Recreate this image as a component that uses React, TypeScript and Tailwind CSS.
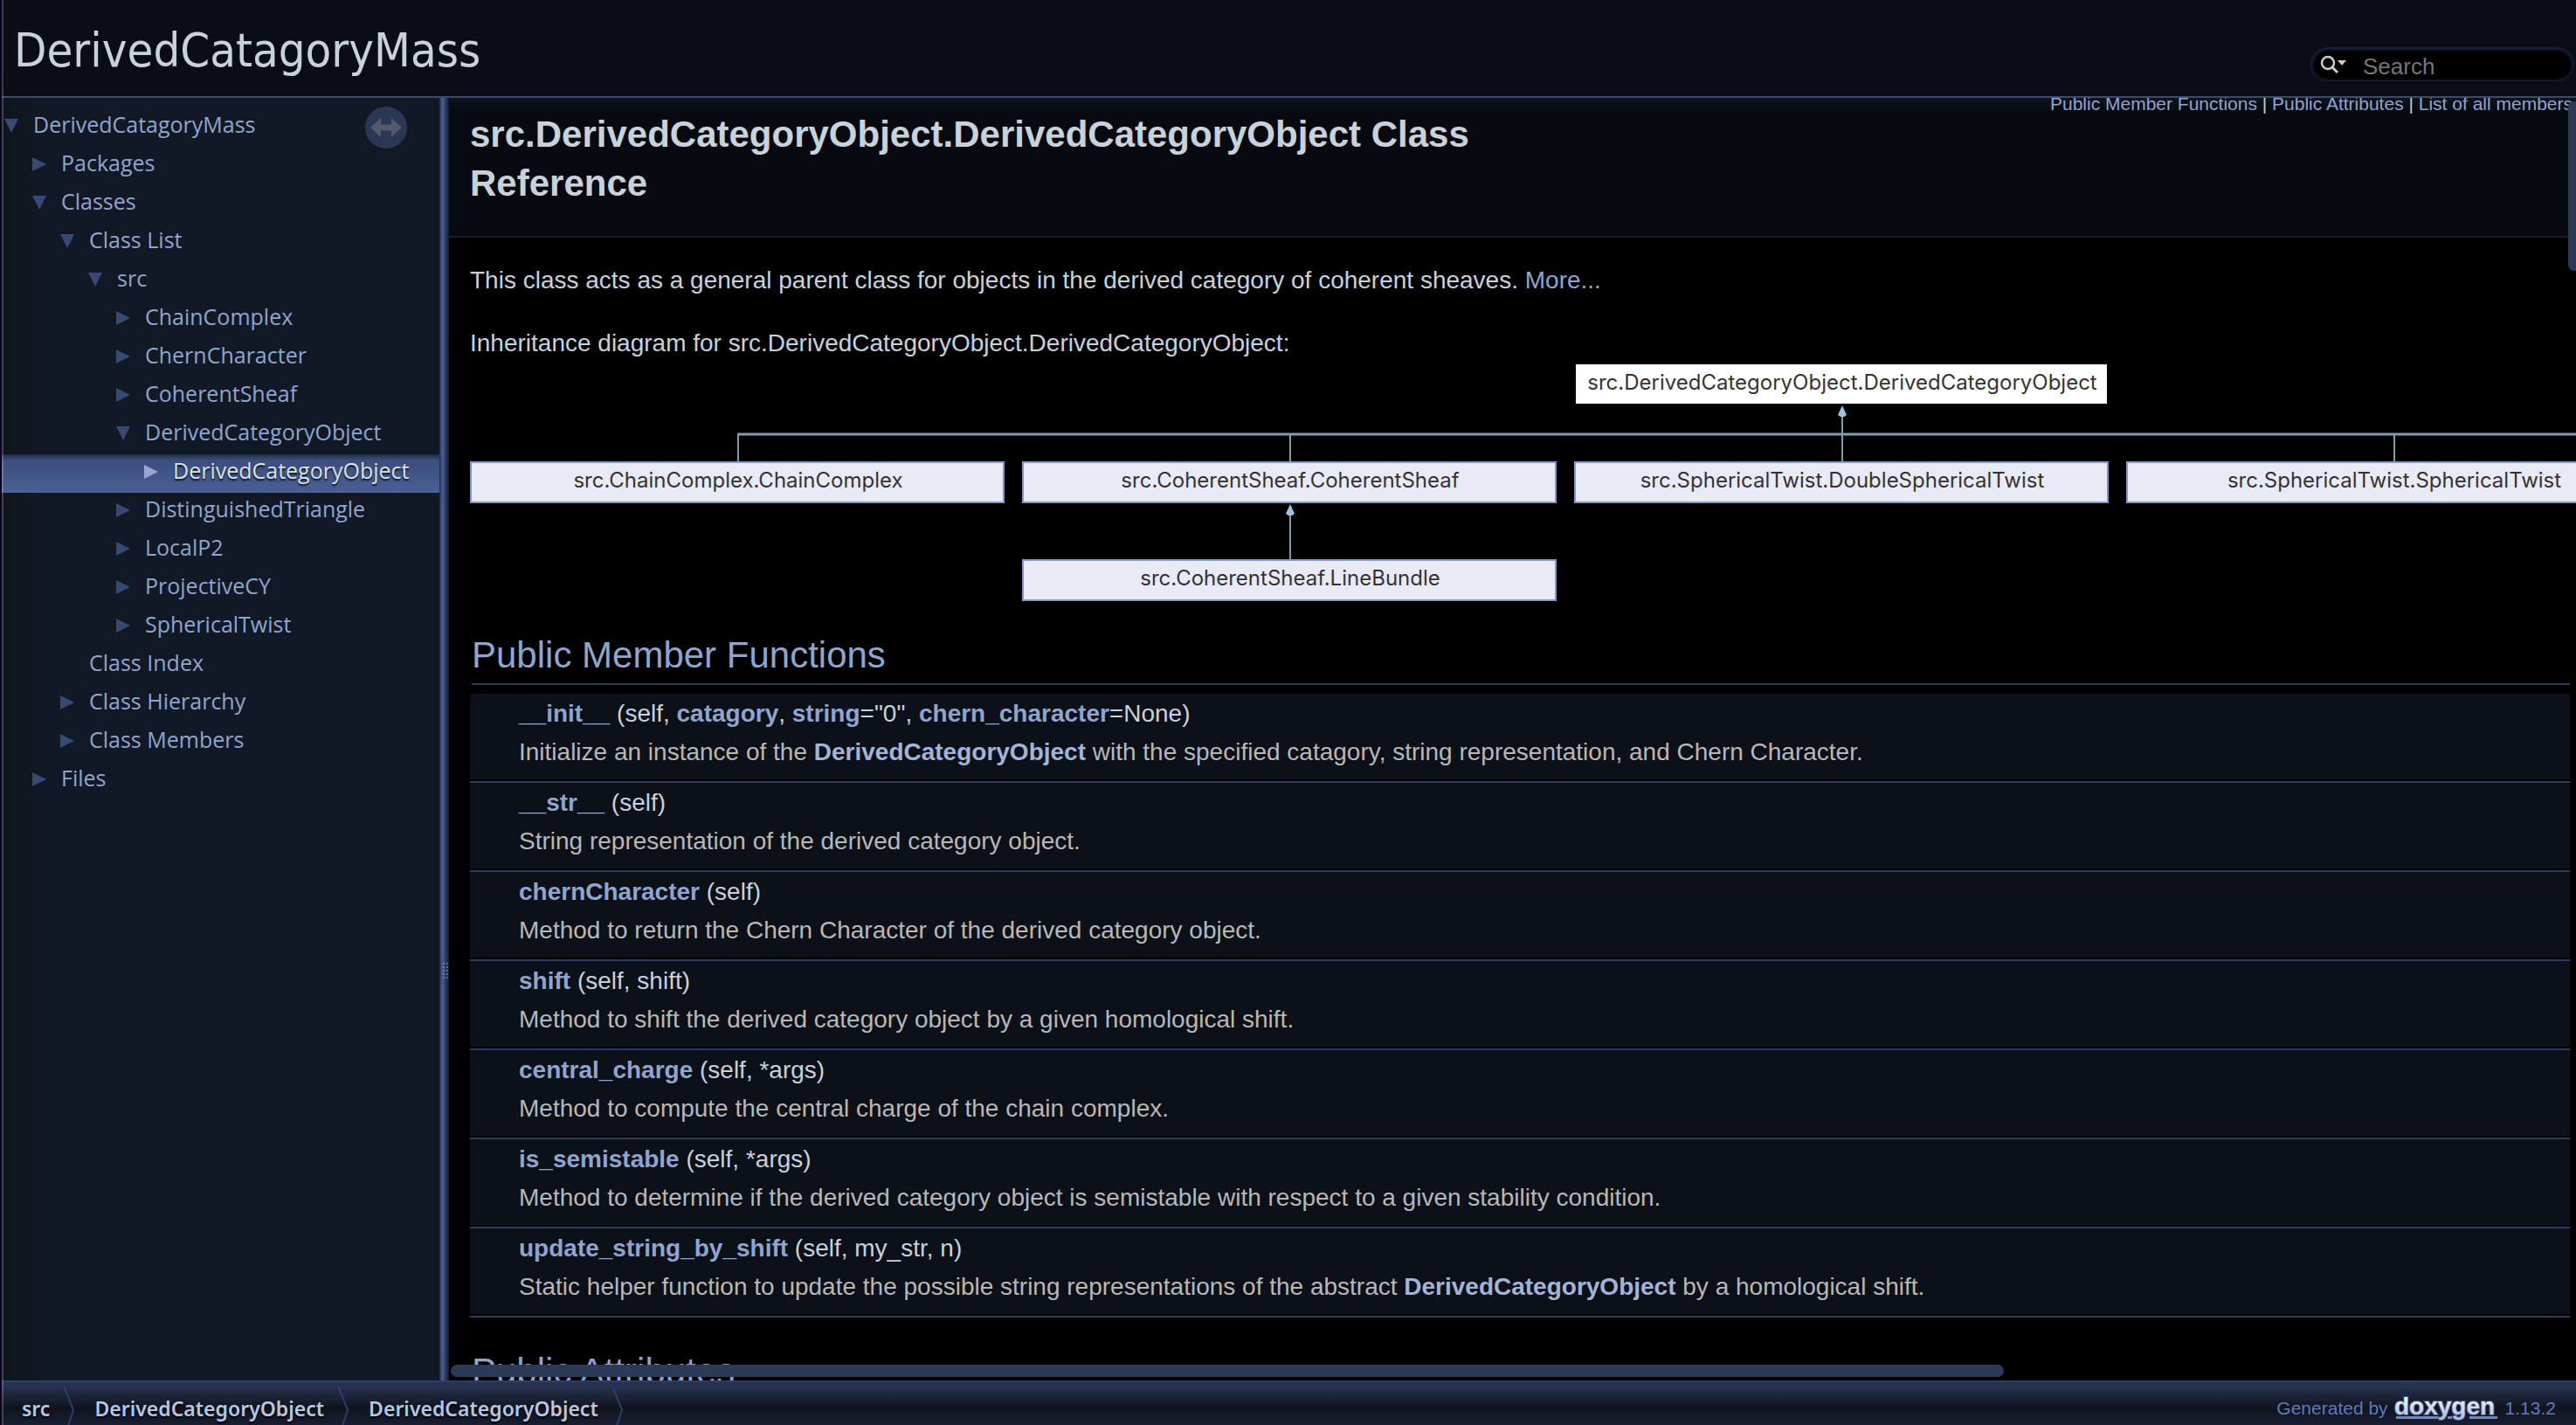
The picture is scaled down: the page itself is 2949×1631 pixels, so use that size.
import type { ReactNode } from 'react';

type Arrow = 'open' | 'closed' | 'none';

const navItems: { label: string; level: number; arrow: Arrow; selected?: boolean }[] = [
  { label: 'DerivedCatagoryMass', level: 0, arrow: 'open' },
  { label: 'Packages', level: 1, arrow: 'closed' },
  { label: 'Classes', level: 1, arrow: 'open' },
  { label: 'Class List', level: 2, arrow: 'open' },
  { label: 'src', level: 3, arrow: 'open' },
  { label: 'ChainComplex', level: 4, arrow: 'closed' },
  { label: 'ChernCharacter', level: 4, arrow: 'closed' },
  { label: 'CoherentSheaf', level: 4, arrow: 'closed' },
  { label: 'DerivedCategoryObject', level: 4, arrow: 'open' },
  { label: 'DerivedCategoryObject', level: 5, arrow: 'closed', selected: true },
  { label: 'DistinguishedTriangle', level: 4, arrow: 'closed' },
  { label: 'LocalP2', level: 4, arrow: 'closed' },
  { label: 'ProjectiveCY', level: 4, arrow: 'closed' },
  { label: 'SphericalTwist', level: 4, arrow: 'closed' },
  { label: 'Class Index', level: 2, arrow: 'none' },
  { label: 'Class Hierarchy', level: 2, arrow: 'closed' },
  { label: 'Class Members', level: 2, arrow: 'closed' },
  { label: 'Files', level: 1, arrow: 'closed' },
];

function Link({ children }: { children: ReactNode }) {
  return (
    <a href="#" className="text-[#90a5ce]">
      {children}
    </a>
  );
}

function Bold({ children }: { children: ReactNode }) {
  return (
    <a href="#" className="font-bold text-[#90a5ce]">
      {children}
    </a>
  );
}

function DescLink() {
  return (
    <a href="#" className="font-bold text-[#a3b4d7]">
      DerivedCategoryObject
    </a>
  );
}

const members: { signature: ReactNode; description: ReactNode }[] = [
  {
    signature: (
      <>
        <Bold>__init__</Bold> (self, <Bold>catagory</Bold>, <Bold>string</Bold>="0", <Bold>chern_character</Bold>=None)
      </>
    ),
    description: (
      <>
        Initialize an instance of the <DescLink /> with the specified catagory, string representation, and Chern
        Character.
      </>
    ),
  },
  {
    signature: (
      <>
        <Bold>__str__</Bold> (self)
      </>
    ),
    description: 'String representation of the derived category object.',
  },
  {
    signature: (
      <>
        <Bold>chernCharacter</Bold> (self)
      </>
    ),
    description: 'Method to return the Chern Character of the derived category object.',
  },
  {
    signature: (
      <>
        <Bold>shift</Bold> (self, shift)
      </>
    ),
    description: 'Method to shift the derived category object by a given homological shift.',
  },
  {
    signature: (
      <>
        <Bold>central_charge</Bold> (self, *args)
      </>
    ),
    description: 'Method to compute the central charge of the chain complex.',
  },
  {
    signature: (
      <>
        <Bold>is_semistable</Bold> (self, *args)
      </>
    ),
    description:
      'Method to determine if the derived category object is semistable with respect to a given stability condition.',
  },
  {
    signature: (
      <>
        <Bold>update_string_by_shift</Bold> (self, my_str, n)
      </>
    ),
    description: (
      <>
        Static helper function to update the possible string representations of the abstract <DescLink /> by a
        homological shift.
      </>
    ),
  },
];

function TreeArrow({ kind, selected }: { kind: Arrow; selected?: boolean }) {
  return (
    <svg width="16" height="40" viewBox="0 0 16 40" className={selected ? 'fill-[#98a7cb]' : 'fill-[#374a76]'}>
      {kind === 'open' && <path d="M0 12H16L8 28Z" />}
      {kind === 'closed' && <path d="M0 12L16 20L0 28Z" />}
    </svg>
  );
}

function Sidebar() {
  return (
    <nav className="relative w-[501px] shrink-0 bg-linear-to-r from-[#10141c] to-[#121926] to-10% pt-3">
      <ul>
        {navItems.map((item, i) => (
          <li
            key={i}
            className={
              item.selected
                ? 'flex h-11 items-start gap-[17px] bg-linear-to-b from-[#202b45] via-[#3b4d7c] via-15% to-[#4a6096]'
                : 'flex h-11 items-start gap-[17px]'
            }
            style={{ paddingLeft: 3 + item.level * 32 }}
          >
            <TreeArrow kind={item.arrow} selected={item.selected} />
            <a
              href="#"
              className={
                item.selected
                  ? 'font-["Open_Sans",sans-serif] text-[25px] leading-9 text-[#dce1ec] [text-shadow:0_2px_2px_#0b101a]'
                  : 'font-["Open_Sans",sans-serif] text-[25px] leading-9 text-[#90a5ce]'
              }
            >
              {item.label}
            </a>
          </li>
        ))}
      </ul>
      <button aria-label="Toggle synchronisation" className="absolute top-2.5 right-[37px] size-12">
        <svg viewBox="0 0 48 48" className="size-12">
          <circle cx="24" cy="24" r="24" fill="#2b3853" />
          <path d="M6 24L18 13V20.500H30V13L42 24L30 35V27.500H18V35Z" fill="#535a69" />
        </svg>
      </button>
    </nav>
  );
}

function Splitter() {
  return (
    <div className="flex w-[11px] shrink-0 items-center justify-end bg-linear-to-r from-[#1e2a45] via-[#4a5f95] via-30% to-[#141b2b]">
      <svg width="8" height="18" viewBox="0 0 8 18" className="mt-[530px] fill-[#8d9cbf]" opacity="0.6">
        {[0, 4, 8, 12, 16].map((y) => (
          <g key={y}>
            <rect x="1" y={y} width="2" height="2" />
            <rect x="5" y={y} width="2" height="2" />
          </g>
        ))}
      </svg>
    </div>
  );
}

const childBoxes = [
  { x: 0, y: 113, label: 'src.ChainComplex.ChainComplex' },
  { x: 632, y: 113, label: 'src.CoherentSheaf.CoherentSheaf' },
  { x: 1264, y: 113, label: 'src.SphericalTwist.DoubleSphericalTwist' },
  { x: 1896, y: 113, label: 'src.SphericalTwist.SphericalTwist' },
  { x: 632, y: 225, label: 'src.CoherentSheaf.LineBundle' },
];

function InheritanceDiagram() {
  return (
    <svg
      width="2510"
      height="274"
      viewBox="0 0 2510 274"
      className='max-w-none font-["Inter",sans-serif] text-[24px]'
      role="img"
      aria-label="Inheritance diagram"
    >
      <g stroke="#7b9db2" strokeWidth="2" fill="none">
        <path d="M306 82H2510" strokeWidth="3" />
        <path d="M307 82V113M939 82V113M1571 56V113M2203 82V113M939 170V225" />
      </g>
      <path d="M1571 49L1576 60L1573 62H1569L1566 60Z" fill="#9cc6e0" />
      <path d="M939 162L944 173L941 175H937L934 173Z" fill="#9cc6e0" />
      <rect x="1266" y="2" width="608" height="45" fill="#ffffff" />
      <text x="1571" y="31" textAnchor="middle" fill="#333333">
        src.DerivedCategoryObject.DerivedCategoryObject
      </text>
      {childBoxes.map((b) => (
        <g key={b.label}>
          <rect x={b.x + 1} y={b.y + 1} width="610" height="46" fill="#e8ebf5" stroke="#8295c4" strokeWidth="2" />
          <text x={b.x + 307} y={b.y + 30} textAnchor="middle" fill="#333333">
            {b.label}
          </text>
        </g>
      ))}
    </svg>
  );
}

function Heading({ children }: { children: ReactNode }) {
  return (
    <h2 className="ml-0.5 border-b-2 border-[#2c3c60] pb-1 text-[42px] leading-[56px] text-[#90a5ce]">{children}</h2>
  );
}

function Main() {
  return (
    <main className="relative min-w-0 flex-1 overflow-hidden bg-black">
      <div className="flex items-start justify-between border-b-2 border-[#151c2c] bg-linear-to-b from-[#0e131f] to-[#070a10] to-10% pr-1 pl-6">
        <h1 className="w-1/2 pt-3.5 pb-8 text-[42px] leading-[56px] font-bold text-[#c9d1d9]">
          src.DerivedCategoryObject.DerivedCategoryObject Class Reference
        </h1>
        <div className="-mt-[5px] text-[21px] leading-6 whitespace-nowrap">
          <Link>Public Member Functions</Link> | <Link>Public Attributes</Link> | <Link>List of all members</Link>
        </div>
      </div>
      <div className="pt-[27px] pr-[7px] pl-6 text-[28px] leading-11">
        <p>
          This class acts as a general parent class for objects in the derived category of coherent sheaves.{' '}
          <Link>More...</Link>
        </p>
        <p className="mt-7">Inheritance diagram for src.DerivedCategoryObject.DerivedCategoryObject:</p>
        <InheritanceDiagram />
        <div className="mt-[33px]">
          <Heading>Public Member Functions</Heading>
        </div>
        <table className="mt-2.5 w-full border-collapse">
          <tbody>
            {members.map((m, i) => (
              <tr key={i}>
                <td className="p-0">
                  <div className="border-b-2 border-[#2c3c60] pb-0.5">
                    <div className="bg-[#0b1019] pt-px pb-[9px] pl-14">
                      <div>{m.signature}</div>
                      <div className="text-[#b8b8b6]">{m.description}</div>
                    </div>
                  </div>
                </td>
              </tr>
            ))}
          </tbody>
        </table>
        <div className="mt-[34px]">
          <Heading>Public Attributes</Heading>
        </div>
      </div>
      <div className="absolute top-1 -right-[5px] h-[194px] w-3.5 rounded-full bg-[#2c3a58]" />
      <div className="absolute bottom-1 left-0.5 h-3.5 w-[73%] rounded-full bg-[#2c3a58]" />
    </main>
  );
}

function Crumb({ children }: { children: ReactNode }) {
  return (
    <li className="flex pl-[22px]">
      <a
        href="#"
        className='mt-3.5 font-["Noto_Sans",sans-serif] text-[23px] leading-8 font-semibold text-[#b9c6e2] [text-shadow:0_2px_2px_#000000]'
      >
        {children}
      </a>
      <svg width="14" height="49" viewBox="0 0 14 49" fill="none" className="ml-[15px]" aria-hidden="true">
        <path d="M1 4L12 32L6 50" stroke="#2d3f68" strokeWidth="2" />
      </svg>
    </li>
  );
}

function DoxygenLogo() {
  return (
    <svg width="122" height="32" viewBox="0 0 122 32" role="img" aria-label="doxygen">
      <defs>
        <linearGradient id="logo" x1="0" y1="0" x2="0" y2="1">
          <stop offset="0.2" stopColor="#f2f5fb" />
          <stop offset="1" stopColor="#a9b9dd" />
        </linearGradient>
      </defs>
      <path d="M3 28.500H52M62 28.500H67M87 28.500H119" stroke="#6f88c4" strokeWidth="3" />
      <text
        x="1"
        y="25"
        fill="url(#logo)"
        stroke="#3f5483"
        strokeWidth="2"
        paintOrder="stroke"
        className='font-["Liberation_Sans",sans-serif] text-[28px] font-bold'
      >
        doxygen
      </text>
    </svg>
  );
}

export default function App() {
  return (
    <div className='relative flex h-screen flex-col overflow-hidden bg-[#08051c] pl-0.5 font-["Liberation_Sans",sans-serif] text-[#c9d1d9]'>
      <header className="flex items-end justify-between border-b-2 border-[#374a76] bg-[#0a0d15] pr-0.5">
        <div className='pt-[22px] pb-4 pl-3.5 font-["DejaVu_Sans_Condensed",sans-serif] text-[54px] leading-[72px]'>
          DerivedCatagoryMass
        </div>
        <label className="mb-[17px] flex h-[39px] w-[302px] items-center rounded-full border border-[#172239] bg-black pl-2.5 shadow-[inset_0_1px_5px_#24365c]">
          <svg width="32" height="24" viewBox="0 0 32 24" fill="none" aria-hidden="true">
            <circle cx="9" cy="10" r="7" stroke="#cccccc" strokeWidth="2.500" />
            <path d="M14 15L20 21" stroke="#cccccc" strokeWidth="3" />
            <path d="M20 7H30L25 13Z" fill="#cccccc" />
          </svg>
          <input
            type="text"
            placeholder="Search"
            aria-label="Search"
            className="ml-[17px] min-w-0 flex-1 bg-transparent pt-1 text-[26px] leading-8 outline-none placeholder:text-[#757575]"
          />
        </label>
      </header>
      <div className="flex min-h-0 flex-1">
        <Sidebar />
        <Splitter />
        <Main />
      </div>
      <footer className="flex h-[51px] shrink-0 justify-between border-t-2 border-[#2e3f66] bg-linear-to-b from-[#26324f] from-10% via-[#10141e] via-60% to-[#181f32] pr-[23px]">
        <ul className="flex pl-px">
          <Crumb>src</Crumb>
          <Crumb>DerivedCategoryObject</Crumb>
          <Crumb>DerivedCategoryObject</Crumb>
        </ul>
        <div className="flex gap-1.5 pt-[18px] text-[21px] leading-6 text-[#607abb]">
          <span>Generated by</span>
          <a href="#" className="-mt-1.5">
            <DoxygenLogo />
          </a>
          <span>1.13.2</span>
        </div>
      </footer>
      <div className="pointer-events-none absolute inset-y-0 left-0.5 w-0.5 bg-white/20" />
    </div>
  );
}
